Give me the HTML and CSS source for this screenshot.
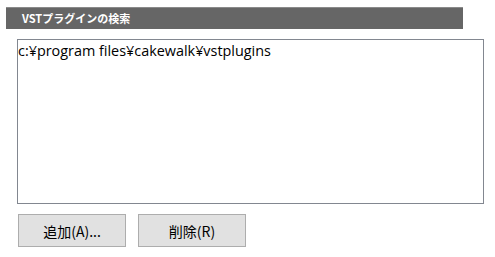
FILE: index.html
```html
<!DOCTYPE html>
<html lang="ja">
<head>
<meta charset="utf-8">
<link rel="stylesheet" href="styles.css">
</head>
<body>
<div class="panel">
  <div class="section-title">VSTプラグインの検索</div>
  <div class="path-list">
    <div class="path-item">c:¥program files¥cakewalk¥vstplugins</div>
  </div>
  <div class="actions">
    <button class="btn">追加(A)...</button>
    <button class="btn">削除(R)</button>
  </div>
</div>
</body>
</html>
```
FILE: styles.css
```css
html, body {
  margin: 0;
  padding: 0;
  background: #ffffff;
}
body {
  width: 495px;
  height: 257px;
  overflow: hidden;
  font-family: "Open Sans", "Noto Sans CJK JP", sans-serif;
}
.panel {
  display: flex;
  flex-direction: column;
  padding-top: 7px;
}
.section-title {
  margin-left: 6px;
  width: 457px;
  height: 22px;
  box-sizing: border-box;
  background: #666666;
  border-top: 1px solid #8a8a8a;
  color: #ffffff;
  font-family: "Noto Sans CJK JP", sans-serif;
  font-weight: 700;
  font-size: 11px;
  line-height: 20px;
  padding-left: 16px;
}
.path-list {
  margin-top: 10px;
  margin-left: 17px;
  width: 467px;
  height: 165px;
  box-sizing: border-box;
  border: 1px solid #828790;
  padding: 2px 0 0 0;
}
.path-item {
  font-size: 14.4px;
  line-height: 18px;
  color: #000000;
  padding-left: 0;
  white-space: nowrap;
}
.actions {
  display: flex;
  gap: 12px;
  margin-top: 10px;
  margin-left: 18px;
}
.btn {
  width: 108px;
  height: 33px;
  box-sizing: border-box;
  background: #e1e1e1;
  border: 1px solid #adadad;
  border-radius: 0;
  padding: 0;
  margin: 0;
  font-family: "Noto Sans CJK JP", sans-serif;
  font-size: 14px;
  color: #000000;
}
```
